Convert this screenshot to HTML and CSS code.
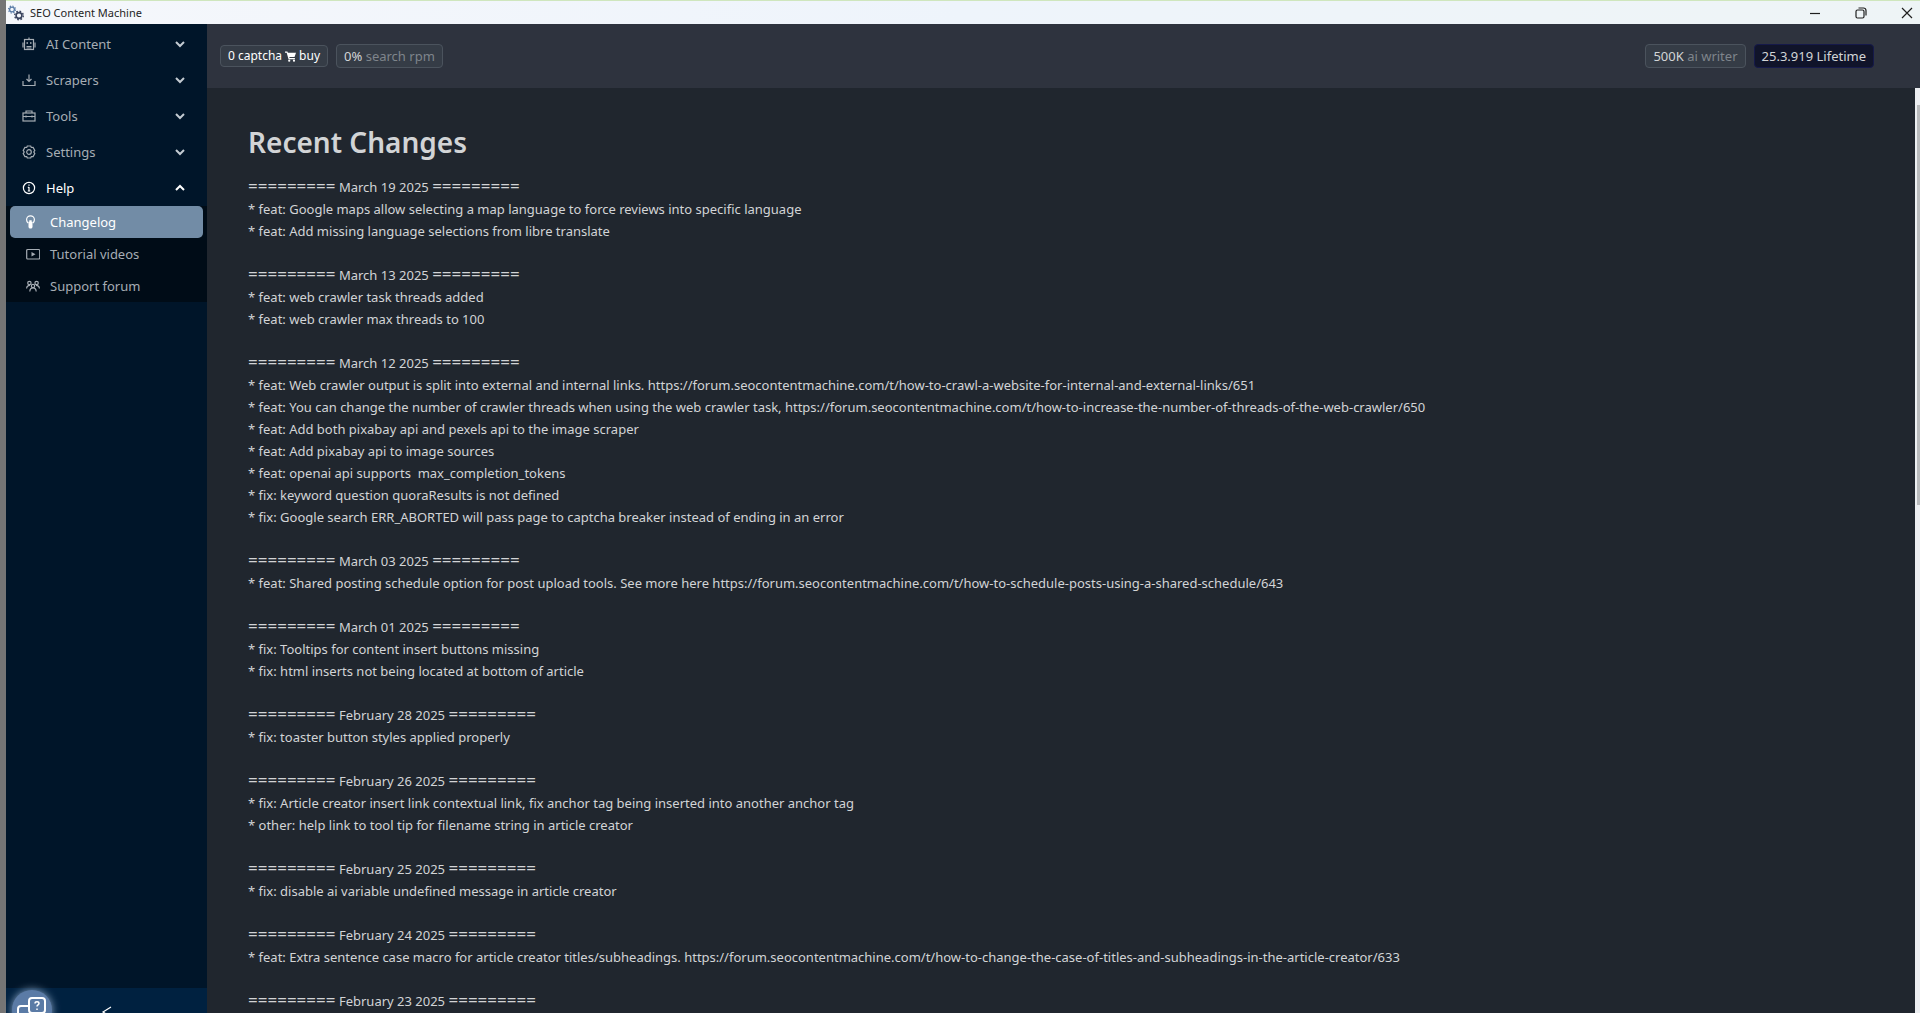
FILE: index.html
```html
<!DOCTYPE html>
<html lang="en">
<head>
  <meta charset="UTF-8">
  <title>SEO Content Machine</title>
  <link rel="stylesheet" href="styles.css">
</head>
<body>
  <div class="window">
    <header class="titlebar">
      <svg class="app-icon" viewBox="0 0 16 16" fill="none">
        <circle cx="4" cy="4.500" r="2.400" stroke="#5b7da8" stroke-width="1.300"/>
        <circle cx="4" cy="4.500" r="3.500" stroke="#5b7da8" stroke-width="1.200" stroke-dasharray="1.370 1.370"/>
        <circle cx="11" cy="10.500" r="2.900" stroke="#3b4560" stroke-width="1.600"/>
        <circle cx="11" cy="10.500" r="4.300" stroke="#3b4560" stroke-width="1.400" stroke-dasharray="1.690 1.690"/>
      </svg>
      <span class="titlebar-text">SEO Content Machine</span>
      <div class="window-buttons">
        <button aria-label="Minimize"><svg viewBox="0 0 12 12"><path d="M1 6.500h10"/></svg></button>
        <button aria-label="Restore"><svg viewBox="0 0 12 12"><rect x="1" y="3" width="8" height="8" rx="1.500"/><path d="M3.500 1h5a2.500 2.500 0 0 1 2.500 2.500v5"/></svg></button>
        <button aria-label="Close"><svg viewBox="0 0 12 12"><path d="M1 1l10 10M11 1L1 11"/></svg></button>
      </div>
    </header>

    <div class="app">
      <nav class="sidebar">
        <button class="menu-item">
          <svg class="icon" viewBox="0 0 14 14"><rect x="2.500" y="2.500" width="9" height="10"/><path d="M7 .500v2M1 5.500v5M13 5.500v5M5.200 5v2M8.800 5v2M4.500 9.500h5M4.500 11h5"/></svg>
          <span>AI Content</span>
          <svg class="arrow" viewBox="0 0 10 10"><path d="M1 3l4 4 4-4"/></svg>
        </button>
        <button class="menu-item">
          <svg class="icon" viewBox="0 0 14 14"><path d="M7 1.500v7M4.500 6L7 8.500 9.500 6M1 8v4.500h12V8"/></svg>
          <span>Scrapers</span>
          <svg class="arrow" viewBox="0 0 10 10"><path d="M1 3l4 4 4-4"/></svg>
        </button>
        <button class="menu-item">
          <svg class="icon" viewBox="0 0 14 14"><rect x="1" y="4" width="12" height="8"/><path d="M4 4V2h6v2M1 7.500h12M4 6.500v2M10 6.500v2"/></svg>
          <span>Tools</span>
          <svg class="arrow" viewBox="0 0 10 10"><path d="M1 3l4 4 4-4"/></svg>
        </button>
        <button class="menu-item">
          <svg class="icon" viewBox="0 0 14 14"><path d="M5.300 1h3.400l.600 1.500 1.800-.100 1.700 3L11.800 7l1 1.600-1.700 3-1.800-.100L8.700 13H5.300l-.600-1.500-1.800.100-1.700-3L2.200 7l-1-1.600 1.700-3 1.800.100z"/><circle cx="7" cy="7" r="2.300"/></svg>
          <span>Settings</span>
          <svg class="arrow" viewBox="0 0 10 10"><path d="M1 3l4 4 4-4"/></svg>
        </button>
        <button class="menu-item open">
          <svg class="icon" viewBox="0 0 14 14"><circle cx="7" cy="7" r="5.600"/><path d="M7 6v4.300M5.800 6.400H7M5.800 10h2.400M7 3.500v1.300"/></svg>
          <span>Help</span>
          <svg class="arrow" viewBox="0 0 10 10"><path d="M1 7l4-4 4 4"/></svg>
        </button>
        <div class="submenu">
          <a class="submenu-item selected" href="#">
            <svg class="icon" viewBox="0 0 14 14"><path d="M2.200 8C.900 7 .600 5.800.600 4.700a3.900 3.900 0 0 1 7.800 0c0 1.100-.300 2.300-1.600 3.300"/><path d="M3.300 5.200h2.400v1.600h.800v5.400l-1 1.300h-2l-1-1.300V6.800h.800z" fill="currentColor" stroke="none"/></svg>
            <span>Changelog</span>
          </a>
          <a class="submenu-item" href="#">
            <svg class="icon" viewBox="0 0 14 14"><rect x=".700" y="2.500" width="13" height="9.500" rx="1"/><path d="M5.500 5v4.500L9.500 7.200z" fill="currentColor" stroke="none"/></svg>
            <span>Tutorial videos</span>
          </a>
          <a class="submenu-item" href="#">
            <svg class="icon" viewBox="0 0 14 14"><circle cx="3.400" cy="4" r="1.700"/><circle cx="10.600" cy="4" r="1.700"/><circle cx="7" cy="7" r="1.700"/><path d="M.600 9.500C.700 7.500 2 6.300 4 6.300M13.400 9.500c-.100-2-1.400-3.200-3.400-3.200M3.800 12.500c.200-2.500 1.400-3.600 3.200-3.600s3 1.100 3.200 3.600"/></svg>
            <span>Support forum</span>
          </a>
        </div>
        <button class="collapse" aria-label="Collapse menu">
          <svg class="icon" viewBox="0 0 14 14"><path d="M11 2L3 7l8 5"/></svg>
        </button>
      </nav>

      <main class="main">
        <div class="topbar">
          <button class="tag small">0 captcha <svg class="cart" viewBox="0 0 12 12"><path d="M0 .500h2.600L3.200 2H12l-1.600 4.500H4.700l.300 1.200h5.800V9H3.900L1.800 1.800H0z" fill="currentColor"/><circle cx="4.600" cy="10.600" r="1.200" fill="currentColor"/><circle cx="9.800" cy="10.600" r="1.200" fill="currentColor"/></svg> buy</button>
          <span class="tag">0% <em>search rpm</em></span>
          <span class="tag right">500K <em>ai writer</em></span>
          <span class="tag version">25.3.919 Lifetime</span>
        </div>

        <div class="content">
          <div class="changelog">
            <h1>Recent Changes</h1>
<pre><i>=========</i> March 19 2025 <i>=========</i>
* feat: Google maps allow selecting a map language to force reviews into specific language
* feat: Add missing language selections from libre translate

<i>=========</i> March 13 2025 <i>=========</i>
* feat: web crawler task threads added
* feat: web crawler max threads to 100

<i>=========</i> March 12 2025 <i>=========</i>
* feat: Web crawler output is split into external and internal links. https://forum.seocontentmachine.com/t/how-to-crawl-a-website-for-internal-and-external-links/651
* feat: You can change the number of crawler threads when using the web crawler task, https://forum.seocontentmachine.com/t/how-to-increase-the-number-of-threads-of-the-web-crawler/650
* feat: Add both pixabay api and pexels api to the image scraper
* feat: Add pixabay api to image sources
* feat: openai api supports  max_completion_tokens
* fix: keyword question quoraResults is not defined
* fix: Google search ERR_ABORTED will pass page to captcha breaker instead of ending in an error

<i>=========</i> March 03 2025 <i>=========</i>
* feat: Shared posting schedule option for post upload tools. See more here https://forum.seocontentmachine.com/t/how-to-schedule-posts-using-a-shared-schedule/643

<i>=========</i> March 01 2025 <i>=========</i>
* fix: Tooltips for content insert buttons missing
* fix: html inserts not being located at bottom of article

<i>=========</i> February 28 2025 <i>=========</i>
* fix: toaster button styles applied properly

<i>=========</i> February 26 2025 <i>=========</i>
* fix: Article creator insert link contextual link, fix anchor tag being inserted into another anchor tag
* other: help link to tool tip for filename string in article creator

<i>=========</i> February 25 2025 <i>=========</i>
* fix: disable ai variable undefined message in article creator

<i>=========</i> February 24 2025 <i>=========</i>
* feat: Extra sentence case macro for article creator titles/subheadings. https://forum.seocontentmachine.com/t/how-to-change-the-case-of-titles-and-subheadings-in-the-article-creator/633

<i>=========</i> February 23 2025 <i>=========</i></pre>
          </div>
          <div class="scrollbar"><div class="thumb"></div></div>
        </div>
      </main>
    </div>
  </div>

  <button class="chat" aria-label="Help chat">
    <svg viewBox="0 0 30 26"><rect x="12" y="1" width="16" height="15" rx="3"/><path d="M12 9H4a3 3 0 0 0-3 3v8a3 3 0 0 0 3 3h12a3 3 0 0 0 3-3v-4"/><path d="M18 6.500c0-2.300 4-2.300 4 0 0 1.500-2 1.300-2 3M20 11.500v1.500" stroke-width="1.500"/></svg>
  </button>
</body>
</html>
```
FILE: styles.css
```css
* {
  box-sizing: border-box;
}

body {
  margin: 0;
  height: 100vh;
  overflow: hidden;
  background: #757575;
  font-family: "Noto Sans", "Open Sans", sans-serif;
  font-size: 13px;
  color: #d2d4d6;
}

button {
  font: inherit;
  color: inherit;
  background: none;
  border: 0;
  padding: 0;
}

svg {
  flex-shrink: 0;
  fill: none;
  stroke: currentColor;
}

/* the bottom of the window runs off the screen */
.window {
  display: flex;
  flex-direction: column;
  height: calc(100vh + 23px);
  margin-left: 6px;
  border-top: 1px solid #cfe6bd;
}

.titlebar {
  display: flex;
  align-items: center;
  gap: 6px;
  height: 23px;
  padding-left: 2px;
  background: linear-gradient(90deg, #f5f7fb, #eef4fb 50%, #eef4f6);
  color: #1f1f1f;
  font-size: 11px;
}

.app-icon {
  width: 16px;
  height: 16px;
  stroke: none;
}

.window-buttons {
  display: flex;
  gap: 34px;
  margin-left: auto;
  padding-right: 7px;
}

.window-buttons button {
  display: flex;
}

.window-buttons svg {
  width: 12px;
  height: 12px;
  stroke-width: 1.2;
}

.app {
  display: flex;
  flex: 1;
  min-height: 0;
}

/* sidebar */
.sidebar {
  display: flex;
  flex-direction: column;
  width: 201px;
  flex-shrink: 0;
  padding-top: 2px;
  background: #001529;
  color: #a6adb4;
}

.menu-item {
  display: flex;
  align-items: center;
  gap: 10px;
  height: 36px;
  padding: 0 22px 0 16px;
  text-align: left;
}

.menu-item.open {
  color: #fff;
}

.icon {
  width: 14px;
  height: 14px;
  stroke-width: 1.2;
}

.arrow {
  width: 10px;
  height: 10px;
  margin-left: auto;
  stroke: #c3cbd2;
  stroke-width: 2;
}

.menu-item.open .arrow {
  stroke: #fff;
}

.submenu {
  background: #000c17;
}

.submenu-item {
  display: flex;
  align-items: center;
  gap: 10px;
  height: 32px;
  margin: 0 4px;
  padding: 0 16px;
  border-radius: 5px;
  color: #a6adb4;
  text-decoration: none;
}

.submenu-item.selected {
  background: #728ca6;
  color: #fff;
}

.collapse {
  display: flex;
  align-items: center;
  justify-content: center;
  height: 48px;
  margin-top: auto;
  background: #002140;
  color: #fff;
}

/* main area */
.main {
  display: flex;
  flex-direction: column;
  flex: 1;
  min-width: 0;
  background: #20262e;
}

.topbar {
  display: flex;
  align-items: center;
  gap: 8px;
  height: 64px;
  padding: 0 46px 0 13px;
  background: #2e333e;
}

.tag {
  height: 24px;
  padding: 0 7px;
  border: 1px solid #4b535d;
  border-radius: 4px;
  background: #353c46;
  line-height: 22px;
  white-space: nowrap;
}

.tag em {
  font-style: normal;
  color: #7f858c;
}

.tag.small {
  display: flex;
  align-items: center;
  gap: 3px;
  height: 22px;
  line-height: 20px;
  font-size: 12px;
  color: #fff;
}

.tag.right {
  margin-left: auto;
}

.tag.version {
  border-color: #15194a;
  background: #10142a;
}

.cart {
  width: 11px;
  height: 11px;
  stroke: none;
}

.content {
  display: flex;
  flex: 1;
  min-height: 0;
}

.changelog {
  flex: 1;
  min-width: 0;
  padding: 34px 41px;
  overflow: hidden;
}

h1 {
  margin: 0 0 14px;
  font-size: 28px;
  line-height: 40px;
  font-weight: 600;
}

pre {
  margin: 0;
  font-family: inherit;
  line-height: 22px;
  white-space: pre-wrap;
}

pre i {
  font-size: 17px;
  font-style: normal;
  line-height: 16px;
}

.scrollbar {
  width: 5px;
  padding-top: 17px;
  background: #eceef1;
}

.thumb {
  height: 43%;
  margin-left: 2px;
  background: #b9bbbd;
}

/* floating help button */
.chat {
  position: fixed;
  left: 12px;
  bottom: -17px;
  display: flex;
  align-items: center;
  justify-content: center;
  width: 40px;
  height: 40px;
  border-radius: 50%;
  background: #5b7ba6;
  box-shadow: 0 0 8px #8fa9c8;
  color: #fff;
}

.chat svg {
  width: 30px;
  height: 26px;
  stroke-width: 2;
}
```
